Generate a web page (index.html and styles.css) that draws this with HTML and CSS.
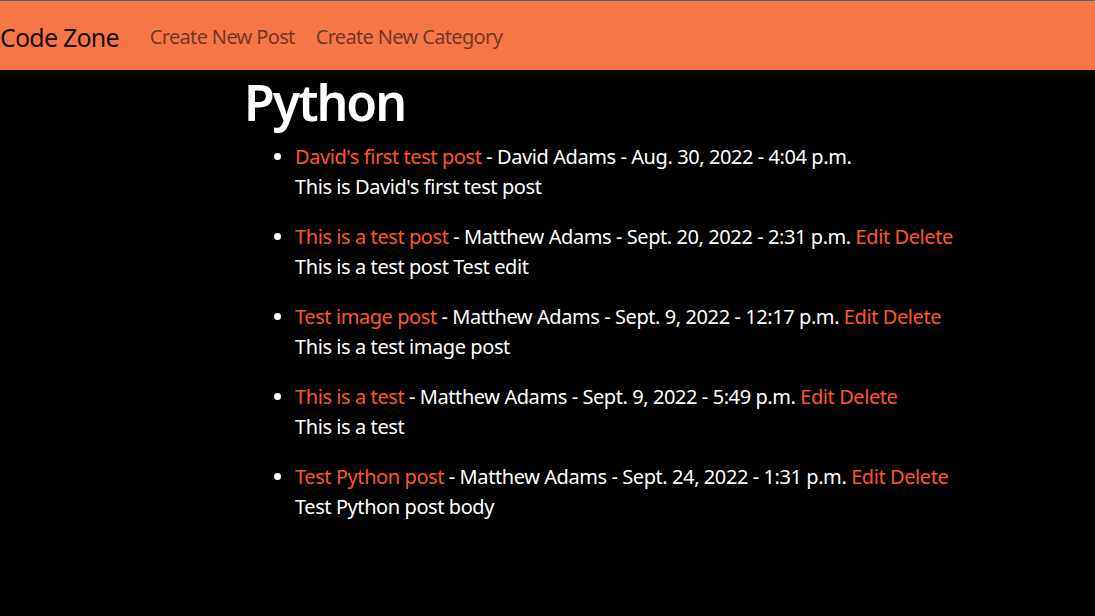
FILE: index.html
```html
<!DOCTYPE html>
<html lang="en">
<head>
<meta charset="utf-8">
<title>Code Zone</title>
<link rel="stylesheet" href="styles.css">
</head>
<body>
<nav class="navbar">
  <a class="brand" href="#">Code Zone</a>
  <a class="nav-link" href="#">Create New Post</a>
  <a class="nav-link" href="#">Create New Category</a>
</nav>
<main class="content">
  <h1 class="title">Python</h1>
  <ul class="posts">
    <li>
      <a href="#">David's first test post</a> - David Adams - Aug. 30, 2022 - 4:04 p.m.
      <p>This is David's first test post</p>
    </li>
    <li>
      <a href="#">This is a test post</a> - Matthew Adams - Sept. 20, 2022 - 2:31 p.m. <a href="#">Edit</a> <a href="#">Delete</a>
      <p>This is a test post Test edit</p>
    </li>
    <li>
      <a href="#">Test image post</a> - Matthew Adams - Sept. 9, 2022 - 12:17 p.m. <a href="#">Edit</a> <a href="#">Delete</a>
      <p>This is a test image post</p>
    </li>
    <li>
      <a href="#">This is a test</a> - Matthew Adams - Sept. 9, 2022 - 5:49 p.m. <a href="#">Edit</a> <a href="#">Delete</a>
      <p>This is a test</p>
    </li>
    <li>
      <a href="#">Test Python post</a> - Matthew Adams - Sept. 24, 2022 - 1:31 p.m. <a href="#">Edit</a> <a href="#">Delete</a>
      <p>Test Python post body</p>
    </li>
  </ul>
</main>
</body>
</html>
```

FILE: styles.css
```css
html, body {
  margin: 0;
  padding: 0;
}
body {
  background: #000;
  color: #fff;
  font-family: "Noto Sans", "Open Sans", sans-serif;
  font-size: 20px;
  line-height: 30px;
  letter-spacing: -0.42px;
  border-top: 1px solid #5f6368;
}
a {
  color: #ff5722;
  text-decoration: none;
}
.navbar {
  background: #f57747;
  height: 69px;
  display: flex;
  align-items: center;
  padding: 2px 0 0;
  box-sizing: border-box;
}
.brand {
  color: rgba(0, 0, 0, 0.9);
  font-size: 25px;
  letter-spacing: -0.8px;
  margin-right: 31px;
}
.nav-link {
  color: rgba(0, 0, 0, 0.55);
  font-size: 20px;
  letter-spacing: -0.65px;
  margin-right: 21px;
}
.content {
  padding-left: 244px;
}
.title {
  font-size: 50px;
  font-weight: 600;
  line-height: 60px;
  letter-spacing: -2px;
  margin: 2px 0 10px;
}
.posts {
  margin: 0;
  padding-left: 51px;
}
.posts p {
  margin: 0 0 20px;
}
```
